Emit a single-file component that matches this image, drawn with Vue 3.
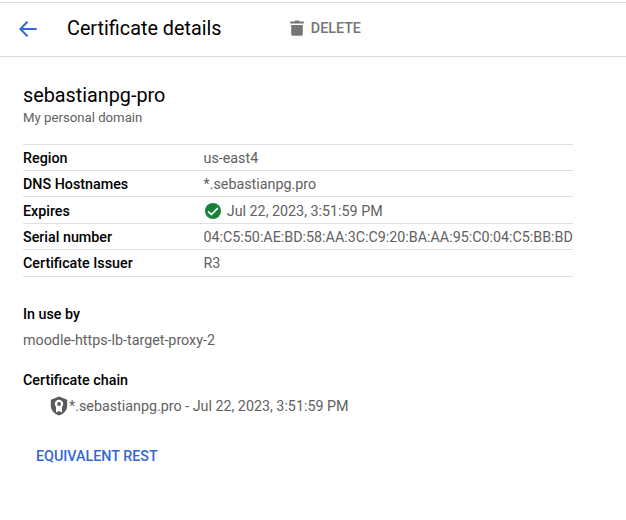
<script setup>
const rows = [
  { label: 'Region', value: 'us-east4' },
  { label: 'DNS Hostnames', value: '*.sebastianpg.pro' },
  { label: 'Expires', value: 'Jul 22, 2023, 3:51:59 PM', valid: true },
  { label: 'Serial number', value: '04:C5:50:AE:BD:58:AA:3C:C9:20:BA:AA:95:C0:04:C5:BB:BD' },
  { label: 'Certificate Issuer', value: 'R3', last: true },
]
</script>

<template>
  <div class="page">
    <header class="bar">
      <svg class="back" width="24" height="24" viewBox="0 0 24 24">
        <path d="M20.6 11H6.8l5.4-5.5L10.8 4 3 12l7.8 8 1.4-1.5L6.8 13h13.8z" fill="#3367d6" />
      </svg>
      <h1 class="title">Certificate details</h1>
      <button class="delete">
        <svg width="18" height="18" viewBox="0 0 18 18">
          <path d="M3.2 6h11.6v8.9c0 1-.8 1.8-1.8 1.8H5c-1 0-1.8-.8-1.8-1.8zM2.2 2.5h4l1-1h3.6l1 1h4v2H2.2z" fill="#757575" />
        </svg>
        <span>DELETE</span>
      </button>
    </header>

    <main class="content">
      <h2 class="name">sebastianpg-pro</h2>
      <p class="description">My personal domain</p>

      <dl class="details">
        <div v-for="row in rows" :key="row.label" class="row" :class="{ tall: row.valid || row.last, valid: row.valid }">
          <dt>{{ row.label }}</dt>
          <dd>
            <svg v-if="row.valid" class="check" width="18" height="18" viewBox="0 0 18 18">
              <circle cx="9" cy="9" r="8" fill="#188038" />
              <path d="M4.1 9.3l3.3 3.2 6.4-6.4" fill="none" stroke="#fff" stroke-width="1.7" />
            </svg>
            <span>{{ row.value }}</span>
          </dd>
        </div>
      </dl>

      <h3 class="heading usage">In use by</h3>
      <p class="text">moodle-https-lb-target-proxy-2</p>

      <h3 class="heading chain">Certificate chain</h3>
      <div class="text link">
        <svg width="18" height="20" viewBox="0 0 18 20">
          <path d="M9 .6l8.2 3.1v6.1c0 4.4-3.3 8.2-8.2 9.6C4.1 18 .8 14.200.8 9.800V3.700z" fill="#5a5a5a" />
          <path d="M6 10h6v6.400l-3-1.300-3 1.300z" fill="#fff" />
          <circle cx="9" cy="8" r="4.200" fill="#fff" />
          <circle cx="9" cy="8" r="1.900" fill="#5a5a5a" />
        </svg>
        <span>*.sebastianpg.pro - Jul 22, 2023, 3:51:59 PM</span>
      </div>

      <button class="rest">EQUIVALENT REST</button>
    </main>
  </div>
</template>

<style>
body {
  background: #fff;
}
</style>

<style scoped>
.page {
  box-sizing: border-box;
  height: 520px;
  padding-top: 2px;
  overflow: hidden;
  background: #fff;
  color: #000;
  font: 14.3px/20px Roboto, sans-serif;
}
h1, h2, h3, p, dl, dt, dd {
  margin: 0;
  font: inherit;
}
button {
  padding: 0;
  border: 0;
  background: none;
  font: 500 14.3px/20px Roboto, sans-serif;
}
svg {
  display: block;
  flex: none;
}
.bar {
  box-sizing: border-box;
  display: flex;
  align-items: center;
  height: 55px;
  padding-left: 16px;
  border-top: 1px solid #dadada;
  border-bottom: 1px solid #dadada;
}
.back {
  margin-top: -1px;
}
.title {
  width: 221px;
  margin-left: 27px;
  margin-top: -1px;
  font-size: 19.8px;
  line-height: 24px;
}
.delete {
  display: flex;
  align-items: center;
  gap: 4.8px;
  margin-top: -3px;
  color: #757575;
}
.content {
  padding: 27px 0 0 23px;
}
.name {
  font-size: 19.8px;
  line-height: 24px;
}
.description {
  margin-top: 1px;
  color: #616161;
  font-size: 13.2px;
  line-height: 18px;
}
.details {
  width: 550px;
  margin-top: 17px;
  border-top: 1px solid #e0e0e0;
}
.row {
  box-sizing: border-box;
  display: flex;
  align-items: center;
  height: 26px;
  border-bottom: 1px solid #e0e0e0;
}
.row.tall {
  height: 27px;
}
.row.valid {
  padding-top: 2px;
}
dt {
  width: 180.5px;
  flex: none;
  font-weight: 500;
}
dd {
  display: flex;
  align-items: center;
  color: #616161;
  white-space: nowrap;
}
.check {
  margin-right: 5.3px;
}
.heading {
  font-weight: 500;
}
.usage {
  margin-top: 27px;
}
.text {
  margin-top: 6px;
  color: #616161;
}
.chain {
  margin-top: 20px;
}
.link {
  display: flex;
  align-items: center;
  gap: 1px;
  padding-left: 27px;
}
.rest {
  display: block;
  margin: 30px 0 0 13px;
  color: #3367d6;
}
</style>
